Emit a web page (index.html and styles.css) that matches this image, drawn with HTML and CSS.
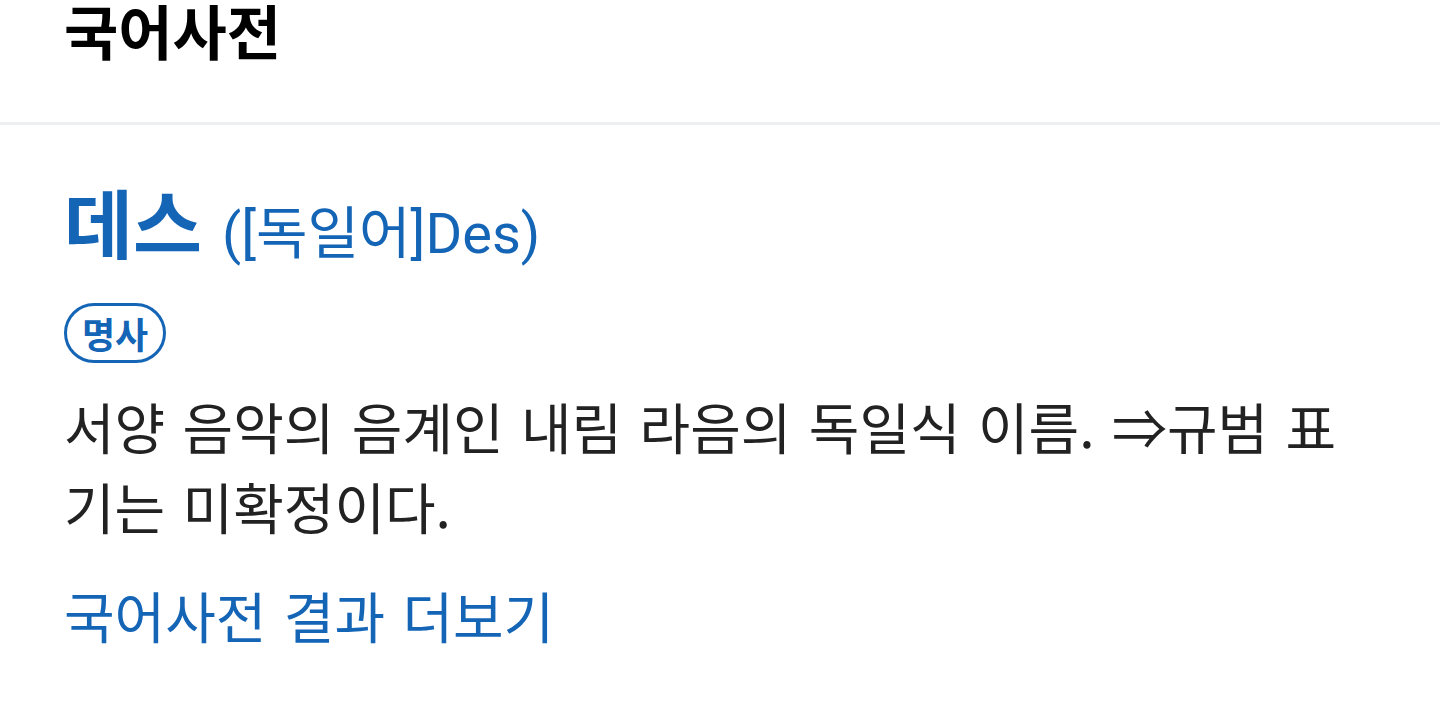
FILE: index.html
```html
<!DOCTYPE html>
<html lang="ko">
<head>
<meta charset="utf-8">
<title>국어사전</title>
<link rel="stylesheet" href="styles.css">
</head>
<body>
<header class="section-head">
  <h2 class="section-title">국어사전</h2>
</header>
<main class="entry">
  <div class="headword-row">
    <span class="headword">데스</span>
    <span class="origin">([독일어]Des)</span>
  </div>
  <div class="pos-row">
    <span class="pos-badge">명사</span>
  </div>
  <p class="definition">서양 음악의 음계인 내림 라음의 독일식 이름. ⇒규범 표기는 미확정이다.</p>
  <a class="more-link" href="#">국어사전 결과 더보기</a>
</main>
</body>
</html>
```

FILE: styles.css
```css
html, body {
  margin: 0;
  padding: 0;
  background: #ffffff;
}

body {
  font-family: "Noto Sans CJK KR", "Noto Sans", sans-serif;
  color: #222222;
  width: 1440px;
  height: 706px;
  overflow: hidden;
}

.section-head {
  padding: 0 64px;
  height: 122px;
  border-bottom: 3px solid #eeeff1;
  box-sizing: content-box;
}

.section-title {
  margin: 0;
  font-size: 59px;
  line-height: 1;
  font-weight: 700;
  color: #000000;
}

.entry {
  padding: 0 64px;
  display: flex;
  flex-direction: column;
  align-items: flex-start;
}

.headword-row {
  margin-top: 58px;
  display: flex;
  align-items: baseline;
  gap: 20px;
  line-height: 1;
}

.headword {
  font-size: 75px;
  font-weight: 700;
  color: #1565b7;
}

.origin {
  font-family: Roboto, "Noto Sans CJK KR", sans-serif;
  font-size: 56px;
  color: #1565b7;
}

.pos-row {
  margin-top: 41px;
  display: flex;
}

.pos-badge {
  box-sizing: border-box;
  display: inline-flex;
  align-items: center;
  justify-content: center;
  height: 60px;
  padding: 0 15px;
  border: 3px solid #1565b7;
  border-radius: 30px;
  font-size: 36px;
  font-weight: 700;
  color: #1565b7;
  line-height: 1;
}

.definition {
  margin: 22px 0 0;
  font-size: 55px;
  line-height: 80px;
  word-spacing: 2px;
  color: #222222;
}

.more-link {
  margin-top: 29px;
  font-size: 55px;
  line-height: 80px;
  word-spacing: 2px;
  color: #1565b7;
  text-decoration: none;
}
```
